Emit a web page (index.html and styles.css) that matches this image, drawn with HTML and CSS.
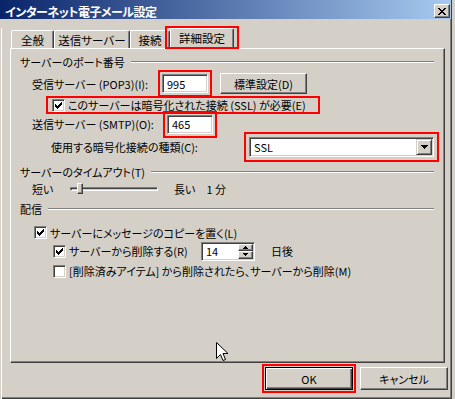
FILE: index.html
```html
<!DOCTYPE html>
<html>
<head>
  <meta charset="utf-8">
  <title>インターネット電子メール設定</title>
  <link rel="stylesheet" href="styles.css">
</head>
<body>

<div class="window">
  <div class="titlebar">
    <span class="title">インターネット電子メール設定</span>
    <span class="close">
      <svg width="8" height="7" viewBox="0 0 8 7"><path d="M0 0h2v1H0zM6 0h2v1H6zM1 1h2v1H1zM5 1h2v1H5zM2 2h4v1H2zM3 3h2v1H3zM2 4h4v1H2zM1 5h2v1H1zM5 5h2v1H5zM0 6h2v1H0zM6 6h2v1H6z" fill="#000"/></svg>
    </span>
  </div>

  <div class="client">
    <div class="tabs">
      <div class="tab tab-general">全般</div>
      <div class="tab tab-send">送信サーバー</div>
      <div class="tab tab-conn">接続</div>
      <div class="tab tab-adv selected">詳細設定</div>
    </div>

    <div class="panel">
      <div class="legend"><span>サーバーのポート番号</span><span class="rule"></span></div>

      <div class="row row-in">
        <span class="label label-in">受信サーバー (POP3)(I):</span>
        <span class="field port hl">995</span>
        <span class="btn btn-default-set">標準設定(D)</span>
      </div>

      <div class="check-row ssl hl-tight">
        <span class="cb checked"><svg width="7" height="7" viewBox="0 0 7 7"><path d="M6 0h1v1H6zM5 1h2v1H5zM0 2h1v1H0zM4 2h3v1H4zM0 3h2v1H0zM3 3h3v1H3zM0 4h5v1H0zM1 5h3v1H1zM2 6h1v1H2z" fill="#000"/></svg></span>
        <span>このサーバーは暗号化された接続 (SSL) が必要(E)</span>
      </div>

      <div class="row row-out">
        <span class="label label-out">送信サーバー (SMTP)(O):</span>
        <span class="field port hl">465</span>
      </div>

      <div class="row row-enc">
        <span class="label label-enc">使用する暗号化接続の種類(C):</span>
        <span class="field combo hl-wide">
          <span class="combo-text">SSL</span>
          <span class="drop"><svg width="7" height="4" viewBox="0 0 7 4"><path d="M0 0h7v1H0zM1 1h5v1H1zM2 2h3v1H2zM3 3h1v1H3z" fill="#000"/></svg></span>
        </span>
      </div>

      <div class="legend legend-timeout"><span>サーバーのタイムアウト(T)</span><span class="rule"></span></div>

      <div class="row row-slider">
        <span class="label label-short">短い</span>
        <span class="slider"><span class="groove"></span><span class="thumb"></span></span>
        <span class="long">長い</span>
        <span class="minutes">1 分</span>
      </div>

      <div class="legend legend-deliver"><span>配信</span><span class="rule"></span></div>

      <div class="check-row copy">
        <span class="cb checked"><svg width="7" height="7" viewBox="0 0 7 7"><path d="M6 0h1v1H6zM5 1h2v1H5zM0 2h1v1H0zM4 2h3v1H4zM0 3h2v1H0zM3 3h3v1H3zM0 4h5v1H0zM1 5h3v1H1zM2 6h1v1H2z" fill="#000"/></svg></span>
        <span>サーバーにメッセージのコピーを置く(L)</span>
      </div>

      <div class="check-row remove">
        <span class="cb checked"><svg width="7" height="7" viewBox="0 0 7 7"><path d="M6 0h1v1H6zM5 1h2v1H5zM0 2h1v1H0zM4 2h3v1H4zM0 3h2v1H0zM3 3h3v1H3zM0 4h5v1H0zM1 5h3v1H1zM2 6h1v1H2z" fill="#000"/></svg></span>
        <span class="label-remove">サーバーから削除する(R)</span>
        <span class="field spin">
          <span class="spin-text">14</span>
          <span class="spin-btns">
            <span class="spin-btn"><svg width="5" height="3" viewBox="0 0 5 3"><path d="M2 0h1v1H2zM1 1h3v1H1zM0 2h5v1H0z" fill="#000"/></svg></span>
            <span class="spin-btn"><svg width="5" height="3" viewBox="0 0 5 3"><path d="M0 0h5v1H0zM1 1h3v1H1zM2 2h1v1H2z" fill="#000"/></svg></span>
          </span>
        </span>
        <span class="days">日後</span>
      </div>

      <div class="check-row deleted">
        <span class="cb"></span>
        <span>[削除済みアイテム] から削除されたら、サーバーから削除(M)</span>
      </div>
    </div>

    <div class="actions">
      <span class="btn btn-ok hl-ok">OK</span>
      <span class="btn btn-cancel">キャンセル</span>
    </div>
  </div>

  <svg class="cursor" width="13" height="20" viewBox="0 0 13 20"><path d="M0.5 0.5V16.5L4.5 12.5L7 18.5L9.5 17.5L7 11.5H12Z" fill="#fff" stroke="#000" stroke-width="1"/></svg>
</div>

</body>
</html>
```

FILE: styles.css
```css
body {
  margin: 0;
  background-color: #d4d0c8;
  font-family: "Noto Sans CJK JP", sans-serif;
  font-size: 11px;
  font-feature-settings: "palt" 1;
  color: #000;
  line-height: 14px;
}
.window {
  position: relative;
  width: 452px;
  height: 399px;
  box-sizing: border-box;
  border-right: 1px solid #404040;
  border-bottom: 1px solid #404040;
  box-shadow: inset -1px -1px #808080;
  background-color: #d4d0c8;
}
.titlebar {
  display: flex;
  justify-content: space-between;
  align-items: flex-start;
  height: 19px;
  box-sizing: border-box;
  padding: 4px 1px 0 5px;
  background: linear-gradient(to right, #0a246a, #a6caf0);
}
.title {
  margin-top: 1px;
  color: #fff;
  font-size: 12px;
  font-weight: bold;
  letter-spacing: -0.5px;
  white-space: nowrap;
}
.close {
  display: flex;
  align-items: center;
  justify-content: center;
  width: 16px;
  height: 14px;
  box-sizing: border-box;
  background-color: #d4d0c8;
  border: 1px solid;
  border-color: #fff #404040 #404040 #fff;
  box-shadow: inset -1px -1px #808080;
}
.client {
  border-left: 1px solid #d4d0c8;
  box-shadow: inset 1px 0 #fff;
  height: 378px;
}

/* tabs */
.tabs {
  display: flex;
  align-items: flex-end;
  height: 20px;
  margin-top: 9px;
  margin-left: 10px;
}
.tab {
  display: flex;
  align-items: center;
  justify-content: center;
  height: 18px;
  box-sizing: border-box;
  border-top: 1px solid #fff;
  border-left: 1px solid #fff;
  border-right: 1px solid #404040;
  box-shadow: inset -1px 0 #808080;
  border-top-left-radius: 2px;
  border-top-right-radius: 2px;
  font-size: 11.5px;
  white-space: nowrap;
}
.tab-general { width: 43px; }
.tab-send { width: 76px; }
.tab-conn { width: 40px; }
.tab-adv { width: 64px; }
.tab.selected {
  position: relative;
  z-index: 1;
  height: 21px;
  margin-bottom: -1px;
  padding-bottom: 2px;
  background-color: #d4d0c8;
}
.tab.selected::after {
  content: "";
  position: absolute;
  top: -3px;
  left: -6px;
  right: -6px;
  bottom: 0;
  border: 2px solid #f00;
}

/* panel */
.panel {
  margin-left: 9px;
  width: 435px;
  height: 315px;
  box-sizing: border-box;
  padding: 6px 9px 0 9px;
  border-top: 1px solid #fff;
  border-left: 1px solid #fff;
  border-right: 1px solid #404040;
  border-bottom: 1px solid #404040;
  box-shadow: inset -1px -1px #808080;
}
.legend {
  display: flex;
  align-items: center;
  gap: 6px;
  height: 14px;
  white-space: nowrap;
}
.rule {
  flex: 1;
  margin-right: 1px;
  border-top: 1px solid #808080;
  border-bottom: 1px solid #fff;
}
.legend-timeout { margin-top: 8px; }
.legend-deliver { margin-top: 6px; }

.row {
  display: flex;
  align-items: center;
  white-space: nowrap;
}
.row-in { margin-top: 4px; height: 21px; }
.row-out { margin-top: 2px; height: 20px; }
.row-enc { margin-top: 3px; height: 20px; }
.row-slider { margin-top: 3px; height: 14px; }

.label-in { margin-left: 12px; width: 130px; }
.label-out { margin-left: 12px; width: 135px; }
.label-enc { margin-left: 31px; }
.label-short { margin-left: 12px; width: 38px; }

.field {
  display: flex;
  align-items: center;
  box-sizing: border-box;
  background-color: #fff;
  border: 1px solid;
  border-color: #808080 #fff #fff #808080;
  box-shadow: inset 1px 1px #404040, inset -1px -1px #d4d0c8;
}
.port {
  width: 46px;
  height: 19px;
  padding-left: 4px;
}
.hl {
  outline: 2px solid #f00;
  outline-offset: 2px;
}
.btn {
  display: flex;
  align-items: center;
  justify-content: center;
  box-sizing: border-box;
  border: 1px solid;
  border-color: #fff #404040 #404040 #fff;
  box-shadow: inset -1px -1px #808080;
  white-space: nowrap;
}
.btn-default-set {
  margin-left: 12px;
  width: 87px;
  height: 21px;
}

/* checkboxes */
.check-row {
  display: flex;
  align-items: center;
  gap: 3px;
  white-space: nowrap;
}
.cb {
  display: flex;
  align-items: center;
  justify-content: center;
  width: 13px;
  height: 13px;
  box-sizing: border-box;
  background-color: #fff;
  border: 1px solid;
  border-color: #808080 #fff #fff #808080;
  box-shadow: inset 1px 1px #404040, inset -1px -1px #d4d0c8;
}
.ssl {
  margin-top: 4px;
  margin-left: 28px;
  width: 270px;
  height: 14px;
  box-sizing: border-box;
  padding-left: 4px;
}
.hl-tight {
  outline: 2px solid #f00;
}
.copy {
  margin-top: 9px;
  height: 15px;
  padding-left: 14px;
}
.remove {
  margin-top: 1px;
  height: 20px;
  padding-left: 33px;
}
.deleted {
  margin-top: 3px;
  height: 14px;
  padding-left: 33px;
}
.label-remove { width: 129px; }

/* combo */
.combo {
  margin-left: auto;
  margin-right: 1px;
  width: 185px;
  height: 20px;
  padding: 1px;
  justify-content: space-between;
}
.combo-text { padding-left: 3px; }
.hl-wide {
  outline: 2px solid #f00;
  outline-offset: 3px;
}
.drop {
  display: flex;
  align-items: center;
  justify-content: center;
  width: 16px;
  height: 16px;
  box-sizing: border-box;
  background-color: #d4d0c8;
  border: 1px solid;
  border-color: #d4d0c8 #404040 #404040 #d4d0c8;
  box-shadow: inset 1px 1px #fff, inset -1px -1px #808080;
}

/* spinner */
.spin {
  width: 54px;
  height: 19px;
  padding: 1px;
  justify-content: space-between;
}
.spin-text { padding-left: 3px; }
.spin-btns {
  display: flex;
  flex-direction: column;
  width: 15px;
  height: 15px;
}
.spin-btn {
  display: flex;
  align-items: center;
  justify-content: center;
  flex: 1;
  box-sizing: border-box;
  background-color: #d4d0c8;
  border: 1px solid;
  border-color: #fff #404040 #404040 #fff;
  box-shadow: inset -1px -1px #808080;
}
.days { margin-left: 13px; }

/* slider */
.slider {
  position: relative;
  width: 88px;
  height: 14px;
}
.groove {
  display: block;
  margin-top: 5px;
  height: 4px;
  box-sizing: border-box;
  border: 1px solid;
  border-color: #808080 #fff #fff #808080;
  box-shadow: inset 1px 1px #404040;
}
.thumb {
  position: absolute;
  left: 7px;
  top: 1px;
  width: 6px;
  height: 11px;
  box-sizing: border-box;
  background-color: #d4d0c8;
  border: 1px solid;
  border-color: #fff #404040 #404040 #fff;
  box-shadow: inset -1px -1px #808080;
}
.long { margin-left: 16px; }
.minutes { margin-left: 11px; }

/* bottom buttons */
.actions {
  display: flex;
  justify-content: flex-end;
  gap: 7px;
  margin-top: 4px;
  padding-right: 3px;
}
.actions .btn {
  width: 88px;
  height: 23px;
}
.btn-ok {
  border: 1px solid #000;
  box-shadow: inset 1px 1px #fff, inset -1px -1px #404040, inset -2px -2px #808080;
}
.hl-ok {
  outline: 2px solid #f00;
  outline-offset: 1px;
}

.cursor {
  position: absolute;
  left: 216px;
  top: 342px;
}
```
